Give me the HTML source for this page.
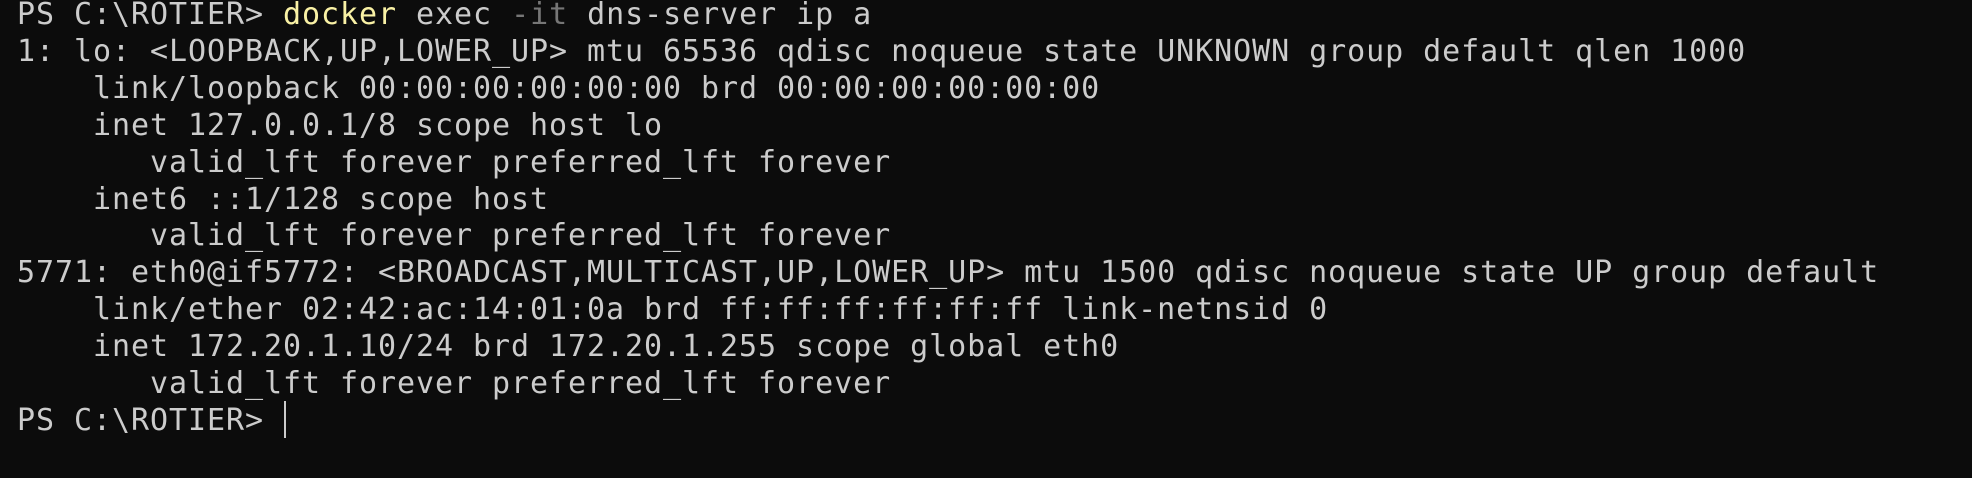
<!DOCTYPE html>
<html><head><meta charset="utf-8"><style>
html,body{margin:0;padding:0;background:#0c0c0c;width:1972px;height:478px;overflow:hidden}
pre{position:absolute;left:17px;top:-3px;margin:0;font-family:"DejaVu Sans Mono","Liberation Mono",monospace;font-size:30px;letter-spacing:0.94px;line-height:36.9px;color:#cccccc;white-space:pre}
.y{color:#f9f1a5}.g{color:#767676}
#cur{position:absolute;left:284px;top:401px;width:2px;height:37px;background:#cccccc}
</style></head><body>
<pre>PS C:\ROTIER&gt; <span class="y">docker</span> exec <span class="g">-it</span> dns-server ip a
1: lo: &lt;LOOPBACK,UP,LOWER_UP&gt; mtu 65536 qdisc noqueue state UNKNOWN group default qlen 1000
    link/loopback 00:00:00:00:00:00 brd 00:00:00:00:00:00
    inet 127.0.0.1/8 scope host lo
       valid_lft forever preferred_lft forever
    inet6 ::1/128 scope host
       valid_lft forever preferred_lft forever
5771: eth0@if5772: &lt;BROADCAST,MULTICAST,UP,LOWER_UP&gt; mtu 1500 qdisc noqueue state UP group default
    link/ether 02:42:ac:14:01:0a brd ff:ff:ff:ff:ff:ff link-netnsid 0
    inet 172.20.1.10/24 brd 172.20.1.255 scope global eth0
       valid_lft forever preferred_lft forever
PS C:\ROTIER&gt; </pre>
<div id="cur"></div>
</body></html>
